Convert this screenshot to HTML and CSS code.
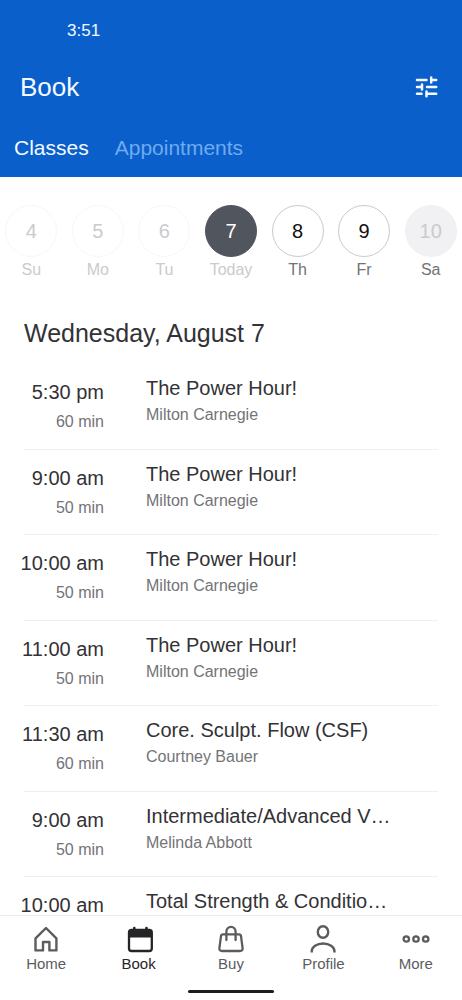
FILE: index.html
```html
<!DOCTYPE html>
<html lang="en">
<head>
<meta charset="utf-8">
<meta name="viewport" content="width=device-width, initial-scale=1">
<title>Book</title>
<link rel="stylesheet" href="styles.css">
</head>
<body>
<div class="app">
  <header class="header">
    <div class="status"><time>3:51</time></div>
    <div class="title-bar">
      <h1 class="title">Book</h1>
      <button class="filter" type="button" aria-label="Filter">
        <svg class="icon" viewBox="0 0 28 28" fill="none" stroke="currentColor" stroke-width="2.5" stroke-linecap="round" aria-hidden="true"><path d="M5 7h9.500M19.200 4.600v4.800M19.200 7h5M5 14h5M10 11.600v4.800M15 14h9.200M5 20.800h4.500M14.500 18.400v4.800M14.500 20.800h9.700"/></svg>
      </button>
    </div>
    <div class="tabs">
      <button class="tab tab-active" type="button">Classes</button>
      <button class="tab" type="button">Appointments</button>
    </div>
  </header>

  <main class="content">
    <div class="days">
      <button class="day day-past" type="button"><span class="day-number">4</span><span class="day-name">Su</span></button>
      <button class="day day-past" type="button"><span class="day-number">5</span><span class="day-name">Mo</span></button>
      <button class="day day-past" type="button"><span class="day-number">6</span><span class="day-name">Tu</span></button>
      <button class="day day-today" type="button"><span class="day-number">7</span><span class="day-name">Today</span></button>
      <button class="day" type="button"><span class="day-number">8</span><span class="day-name">Th</span></button>
      <button class="day" type="button"><span class="day-number">9</span><span class="day-name">Fr</span></button>
      <button class="day day-closed" type="button"><span class="day-number">10</span><span class="day-name">Sa</span></button>
    </div>

    <h2 class="date">Wednesday, August 7</h2>

    <ul class="classes">
      <li class="class">
        <div class="when"><time class="start">5:30 pm</time><span class="detail">60 min</span></div>
        <div class="what"><h3 class="name">The Power Hour!</h3><p class="detail">Milton Carnegie</p></div>
      </li>
      <li class="class">
        <div class="when"><time class="start">9:00 am</time><span class="detail">50 min</span></div>
        <div class="what"><h3 class="name">The Power Hour!</h3><p class="detail">Milton Carnegie</p></div>
      </li>
      <li class="class">
        <div class="when"><time class="start">10:00 am</time><span class="detail">50 min</span></div>
        <div class="what"><h3 class="name">The Power Hour!</h3><p class="detail">Milton Carnegie</p></div>
      </li>
      <li class="class">
        <div class="when"><time class="start">11:00 am</time><span class="detail">50 min</span></div>
        <div class="what"><h3 class="name">The Power Hour!</h3><p class="detail">Milton Carnegie</p></div>
      </li>
      <li class="class">
        <div class="when"><time class="start">11:30 am</time><span class="detail">60 min</span></div>
        <div class="what"><h3 class="name">Core. Sculpt. Flow (CSF)</h3><p class="detail">Courtney Bauer</p></div>
      </li>
      <li class="class">
        <div class="when"><time class="start">9:00 am</time><span class="detail">50 min</span></div>
        <div class="what"><h3 class="name">Intermediate/Advanced V…</h3><p class="detail">Melinda Abbott</p></div>
      </li>
      <li class="class">
        <div class="when"><time class="start">10:00 am</time></div>
        <div class="what"><h3 class="name">Total Strength &amp; Conditio…</h3></div>
      </li>
    </ul>
  </main>

  <footer class="footer">
    <nav class="nav">
      <a class="nav-item" href="#home">
        <svg class="icon" viewBox="0 0 28 28" fill="none" stroke="currentColor" stroke-width="2.4" aria-hidden="true"><path d="M14 3 3.5 13.4V25.4H11V17h6.4v8.4h7V13.4Z" stroke-linejoin="round"/></svg>
        Home
      </a>
      <a class="nav-item nav-active" href="#book" aria-current="page">
        <svg class="icon" viewBox="0 0 28 28" fill="none" stroke="currentColor" aria-hidden="true"><rect x="4" y="5" width="22.800" height="21" rx="2.500" stroke-width="2.300"/><path d="M4 6h22.800v6.500H4z" fill="currentColor" stroke="none"/><path d="M9.3 3V6M21.500 3V6" stroke-width="2.600" stroke-linecap="round"/></svg>
        Book
      </a>
      <a class="nav-item" href="#buy">
        <svg class="icon" viewBox="0 0 28 28" fill="none" stroke="currentColor" stroke-width="2.3" stroke-linecap="round" stroke-linejoin="round" aria-hidden="true"><path d="M6 9.300h16q1.800 0 2 1.800l1.600 12q.3 2.900-2.600 2.900H5q-2.900 0-2.600-2.900l1.600-12q.2-1.800 2-1.800ZM9.400 15V6.800a4.600 5 0 0 1 9.200 0V15"/></svg>
        Buy
      </a>
      <a class="nav-item" href="#profile">
        <svg class="icon" viewBox="0 0 28 28" fill="none" stroke="currentColor" stroke-width="2.4" aria-hidden="true"><ellipse cx="14" cy="7" rx="5.200" ry="5.800"/><path d="M2.700 27.500v-1a11.400 8 0 0 1 22.800 0v1"/></svg>
        Profile
      </a>
      <a class="nav-item" href="#more">
        <svg class="icon" viewBox="0 0 28 28" fill="none" stroke="currentColor" stroke-width="2.3" aria-hidden="true"><circle cx="4.300" cy="14" r="2.700"/><circle cx="14" cy="14" r="2.700"/><circle cx="23.700" cy="14" r="2.700"/></svg>
        More
      </a>
    </nav>
    <div class="home-bar"></div>
  </footer>
</div>
</body>
</html>
```
FILE: styles.css
```css
* { box-sizing: border-box; }

body {
  margin: 0;
  background: #fff;
  color: #333236;
  font-family: "Liberation Sans", Arial, sans-serif;
}

h1, h2, h3, p, ul { margin: 0; padding: 0; font-weight: 400; }

button {
  padding: 0;
  border: 0;
  background: none;
  color: inherit;
  font: inherit;
}

.icon { display: block; width: 28px; height: 28px; }

.app { display: flex; flex-direction: column; height: 100vh; }

.header { padding: 20px 0 16px; background: #0a5fca; color: #f4faff; }
.status { padding: 0 67px; font-size: 17px; line-height: 22px; }
.title-bar {
  display: flex;
  align-items: center;
  justify-content: space-between;
  padding: 28px 22px 0 20px;
}
.title { font-size: 26px; line-height: 34px; }
.tabs { display: flex; gap: 26px; padding: 31px 14px 1px; }
.tab { color: #70abf0; font-size: 21px; line-height: 25px; }
.tab-active { color: #f4faff; }

.content { flex: 1; min-height: 0; overflow-y: auto; scrollbar-width: none; }

.days { display: grid; grid-template-columns: repeat(7, 1fr); margin: 28px -2px 0; }
.day {
  display: flex;
  flex-direction: column;
  align-items: center;
  gap: 3px;
  color: #737277;
}
.day-number {
  width: 52px;
  height: 52px;
  border: 1px solid #cbcbcd;
  border-radius: 50%;
  color: #111;
  font-size: 20px;
  line-height: 50px;
}
.day-name { font-size: 16px; line-height: 20px; }
.day-past { color: #cbcacd; }
.day-past .day-number { border-color: #f7f7f7; color: #cbcacd; }
.day-today { color: #cbcacd; }
.day-today .day-number { border-color: #51555e; background: #51555e; color: #fff; }
.day-closed .day-number { border-color: #f1f0f3; background: #f1f0f3; color: #cbcacd; }

.date { padding: 37px 24px 0; font-size: 25px; line-height: 32px; }

.classes { margin: 15px 24px 0; list-style: none; }
.class {
  display: flex;
  gap: 42px;
  min-height: 85px;
  padding-top: 12px;
  border-bottom: 1px solid #efeff0;
}
.class:nth-child(odd) { min-height: 86px; }
.when {
  display: flex;
  flex-direction: column;
  align-items: flex-end;
  gap: 7px;
  width: 80px;
  padding-top: 4px;
  white-space: nowrap;
}
.start, .name { font-size: 20px; line-height: 24px; }
.what { display: flex; flex: 1; flex-direction: column; gap: 4px; min-width: 0; }
.detail { color: #747377; font-size: 16px; line-height: 22px; }

.footer { border-top: 1px solid #e9e9ea; background: #fff; }
.nav { display: grid; grid-template-columns: repeat(5, 1fr); padding-top: 9px; }
.nav-item {
  display: flex;
  flex-direction: column;
  align-items: center;
  gap: 2px;
  color: #5c5c5f;
  font-size: 15px;
  line-height: 18px;
  text-decoration: none;
}
.nav-active { color: #252528; }
.home-bar {
  width: 86px;
  height: 3px;
  margin: 17px auto 7px;
  border-radius: 2px;
  background: #1d1d1f;
}
```
